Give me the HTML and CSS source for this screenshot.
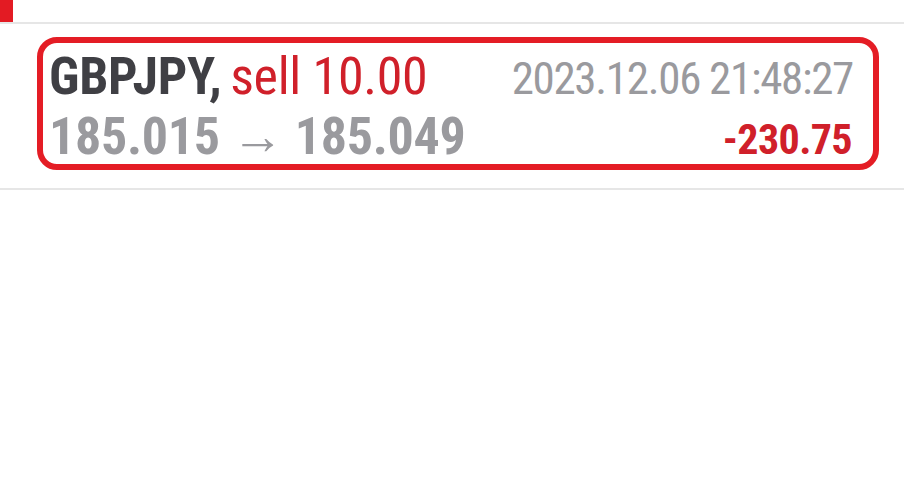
FILE: index.html
```html
<!DOCTYPE html>
<html>
<head>
<meta charset="utf-8">
<link rel="stylesheet" href="styles.css">
</head>
<body>
<div class="topbar"><div class="tab"></div></div>
<div class="row">
  <div class="card">
    <div class="line line1">
      <div class="left"><span class="sym">GBPJPY,</span> <span class="side">sell 10.00</span></div>
      <div class="time">2023.12.06 21:48:27</div>
    </div>
    <div class="line line2">
      <div class="prices">185.015 <span class="arrow">→</span> 185.049</div>
      <div class="profit">-230.75</div>
    </div>
  </div>
</div>
</body>
</html>
```
FILE: styles.css
```css
html, body {
  margin: 0;
  padding: 0;
  background: #ffffff;
}
body {
  font-family: "Roboto Condensed", Roboto, "Liberation Sans", sans-serif;
  font-stretch: 75%;
}
.topbar {
  height: 22px;
  border-bottom: 2px solid #e6e6e6;
}
.tab {
  width: 13px;
  height: 22px;
  background: #e31b23;
}
.row {
  padding: 13px 25px 18px 37px;
  border-bottom: 2px solid #e6e6e6;
}
.card {
  box-sizing: border-box;
  height: 133px;
  border: 6px solid #e41d25;
  border-radius: 20px;
  padding: 4px 21px 0 6px;
}
.line {
  display: flex;
  justify-content: space-between;
  align-items: baseline;
  line-height: 60px;
  height: 60px;
}
.sym {
  font-size: 52px;
  font-weight: 700;
  color: #3f3f44;
  letter-spacing: -0.3px;
}
.side {
  font-size: 52px;
  font-weight: 400;
  color: #d0202a;
  margin-left: 5px;
  letter-spacing: -0.3px;
}
.time {
  font-size: 45px;
  color: #9a9a9e;
  letter-spacing: -1.3px;
  margin-right: -1px;
}
.prices {
  font-size: 52px;
  font-weight: 700;
  color: #9a9a9e;
  letter-spacing: -0.3px;
}
.arrow {
  font-weight: 400;
}
.profit {
  font-size: 42px;
  font-weight: 700;
  color: #d0202a;
  letter-spacing: -0.6px;
}
```
